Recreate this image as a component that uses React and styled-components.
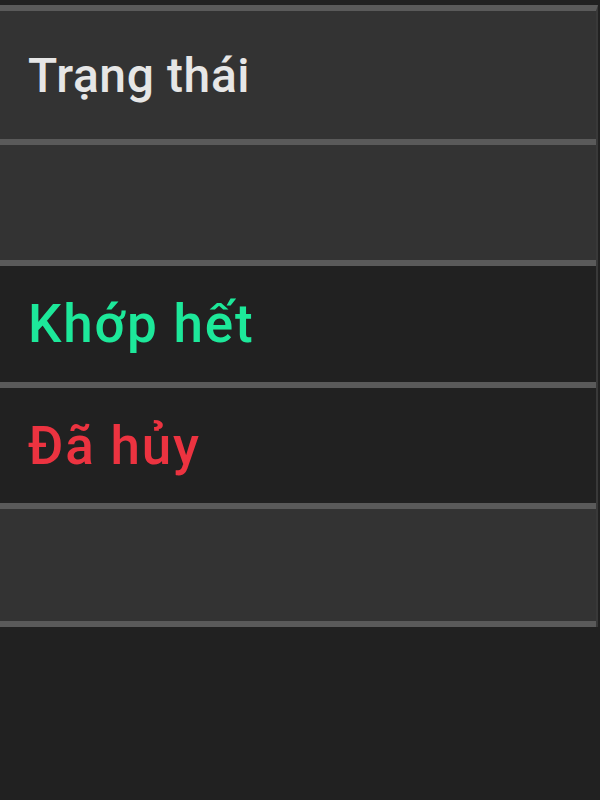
import React from 'react';
import styled, { createGlobalStyle } from 'styled-components';

const GlobalStyle = createGlobalStyle`
    body {
        margin: 0;
        background: #212121;
        font-family: Roboto, "Liberation Sans", sans-serif;
    }
`

const Page = styled.div`
    width: 600px;
    height: 800px;
    background: #212121;
    padding-top: 5px;
    box-sizing: border-box;
`

const Table = styled.div`
    display: flex;
    flex-direction: column;
    width: 596px;
    border-right: 2px solid #393939;
    border-top: 6px solid #5a5a5a;
`

const Row = styled.div`
    display: flex;
    align-items: center;
    height: ${props => props.$height}px;
    padding-left: 28px;
    background: ${props => props.$dark ? '#212121' : '#333333'};
    border-bottom: 6px solid #5a5a5a;
`

const Cell = styled.span`
    font-size: ${props => props.$head ? 48 : 53}px;
    font-weight: 500;
    color: ${props => props.$color || '#e6e6e6'};
    letter-spacing: ${props => props.$head ? 0.6 : 1.8}px;
`

const rows = [
    { label: '', dark: false, height: 115 },
    { label: 'Khớp hết', dark: true, color: '#1de89a', height: 116 },
    { label: 'Đã hủy', dark: true, color: '#ec3340', height: 115 },
    { label: '', dark: false, height: 112 },
];

export default function App() {
    return (
        <Page>
            <GlobalStyle />
            <Table>
                <Row $height={128}>
                    <Cell $head>Trạng thái</Cell>
                </Row>
                {rows.map((r, i) => (
                    <Row key={i} $dark={r.dark} $height={r.height}>
                        <Cell $color={r.color}>{r.label}</Cell>
                    </Row>
                ))}
            </Table>
        </Page>
    );
}
